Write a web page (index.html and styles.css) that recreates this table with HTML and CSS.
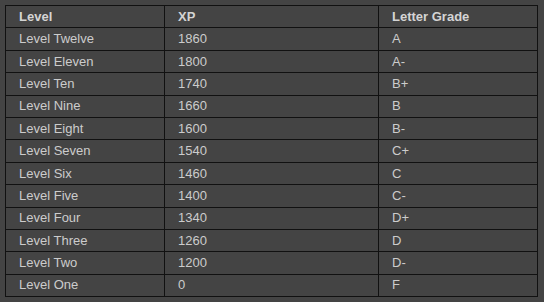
FILE: index.html
```html
<!DOCTYPE html>
<html>
<head>
<meta charset="utf-8">
<link rel="stylesheet" href="styles.css">
</head>
<body>
<table class="grades">
  <colgroup>
    <col class="c-level">
    <col class="c-xp">
    <col class="c-grade">
  </colgroup>
  <thead>
    <tr><th>Level</th><th>XP</th><th>Letter Grade</th></tr>
  </thead>
  <tbody>
    <tr><td>Level Twelve</td><td>1860</td><td>A</td></tr>
    <tr><td>Level Eleven</td><td>1800</td><td>A-</td></tr>
    <tr><td>Level Ten</td><td>1740</td><td>B+</td></tr>
    <tr><td>Level Nine</td><td>1660</td><td>B</td></tr>
    <tr><td>Level Eight</td><td>1600</td><td>B-</td></tr>
    <tr><td>Level Seven</td><td>1540</td><td>C+</td></tr>
    <tr><td>Level Six</td><td>1460</td><td>C</td></tr>
    <tr><td>Level Five</td><td>1400</td><td>C-</td></tr>
    <tr><td>Level Four</td><td>1340</td><td>D+</td></tr>
    <tr><td>Level Three</td><td>1260</td><td>D</td></tr>
    <tr><td>Level Two</td><td>1200</td><td>D-</td></tr>
    <tr><td>Level One</td><td>0</td><td>F</td></tr>
  </tbody>
</table>
</body>
</html>
```
FILE: styles.css
```css
html, body {
  background: #444444;
}
body {
  margin: 5px;
  font-family: "Liberation Sans", Arial, sans-serif;
  font-size: 13px;
  color: #cccccc;
}
.grades {
  border-collapse: collapse;
  width: 532px;
  table-layout: fixed;
}
.c-level { width: 159px; }
.c-xp { width: 214px; }
.c-grade { width: 159px; }
.grades th,
.grades td {
  border: 1px solid #111111;
  text-align: left;
  line-height: 15px;
  padding: 2.8px 13px 3.6px;
  white-space: nowrap;
}
.grades th {
  font-weight: bold;
  color: #d4d4d4;
}
```
